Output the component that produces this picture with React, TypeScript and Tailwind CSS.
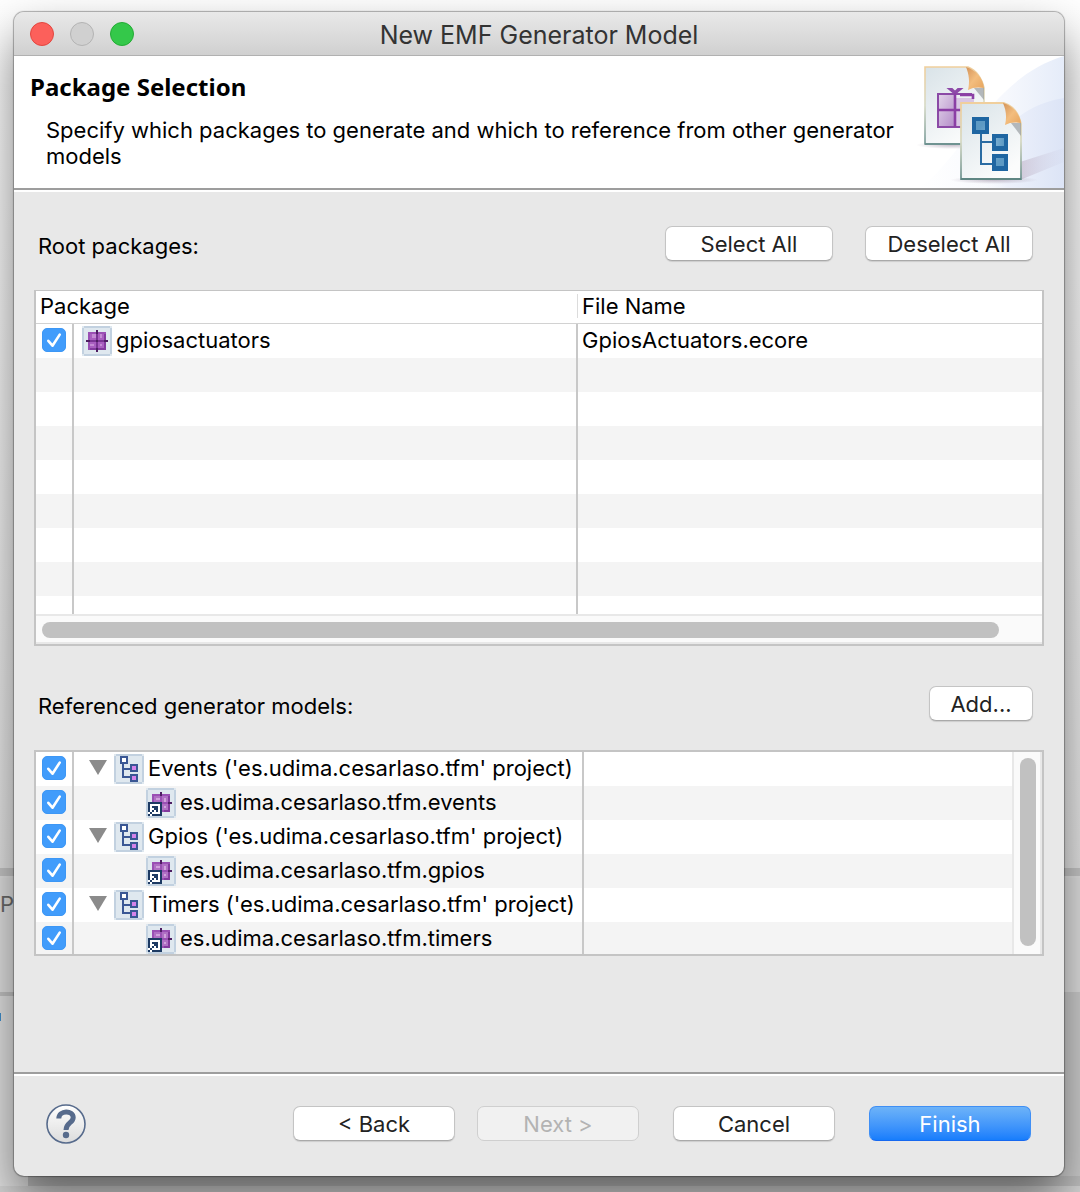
import { useState } from "react";
import type { ReactNode } from "react";

function Checkbox({ label }: { label: string }) {
  const [on, setOn] = useState(true);
  return (
    <span className="relative block size-6">
      <input
        type="checkbox"
        aria-label={label}
        checked={on}
        onChange={(e) => setOn(e.target.checked)}
        className="block size-6 appearance-none rounded-[5px] border border-gray-300 bg-white checked:border-[#3d97f5] checked:bg-[#419cfb]"
      />
      {on && (
        <svg viewBox="0 0 24 24" className="pointer-events-none absolute inset-0 size-6">
          <path d="M6.3 12.8l4.2 4.9L17.7 6.600" fill="none" stroke="#fff" strokeWidth="2.600" strokeLinecap="round" strokeLinejoin="round" />
        </svg>
      )}
    </span>
  );
}

function IconFrame({ children }: { children: ReactNode }) {
  return (
    <svg viewBox="0 0 30 30" className="size-[30px] shrink-0" shapeRendering="crispEdges" aria-hidden="true">
      <rect width="30" height="30" fill="#dfe8ef" />
      <path d="M2 0H28V2H2zM2 28H28V30H2zM0 2H2V28H0zM28 2H30V28H28z" fill="#c2d1e0" />
      {children}
    </svg>
  );
}

function PackageIcon() {
  return (
    <IconFrame>
      <rect x="6" y="6" width="18" height="18" fill="#9a50b4" />
      <path d="M22 8h2v16H8v-2h14z" fill="#833a9e" />
      <path d="M8 8h6v6H8zM16 8h6v6h-6zM8 16h6v6H8zM16 16h6v6h-6z" fill="#a95fc0" />
      <path d="M10 8h4v4h-4zM18 8h2v4h-2zM8 18h4v2H8zM18 18h2v2h-2z" fill="#c48bd4" />
      <path d="M14 6h2v18h-2zM6 14h18v2H6z" fill="#7a3494" />
      <path d="M14 4h2v4h-2zM14 22h2v4h-2zM4 14h4v2H4zM22 14h4v2h-4zM14 14h2v2h-2z" fill="#4e1d62" />
    </IconFrame>
  );
}

function PackageLinkIcon() {
  return (
    <IconFrame>
      <rect x="6" y="6" width="18" height="18" fill="#9a50b4" />
      <path d="M22 8h2v16h-6v-2h4z" fill="#833a9e" />
      <path d="M8 8h6v6H8zM16 8h6v6h-6zM16 16h6v6h-6z" fill="#b070c4" />
      <path d="M10 10h4v2h-4zM18 10h2v4h-2zM18 18h2v2h-2z" fill="#d0a2dc" />
      <path d="M14 4h2v4h-2zM22 14h4v2h-4z" fill="#4e1d62" />
      <rect x="2" y="14" width="14" height="14" fill="#fff" />
      <path d="M2 14h14v14H6v-2h8V16H4v8H2z" fill="#1d3a63" />
      <path d="M6 18h6v6h-2v-4H6zM8 20h2v2H8zM6 22h2v2H6zM4 24h2v2H4zM2 26h2v2H2z" fill="#1d3a63" />
    </IconFrame>
  );
}

function ModelIcon() {
  return (
    <IconFrame>
      <path d="M8 10h2v4h6v2h-6v6h6v2H8zM6 2h8v8H6zM16 10h8v8h-8zM16 20h8v8h-8z" fill="#3a5794" />
      <rect x="8" y="4" width="4" height="4" fill="#fff" />
      <path d="M18 12h4v4h-4zM18 22h4v4h-4z" fill="#d583ea" />
    </IconFrame>
  );
}

function WizardArt() {
  return (
    <svg viewBox="0 0 154 132" className="h-[132px] w-[154px] shrink-0" aria-hidden="true">
      <defs>
        <linearGradient id="wave" x1="0" x2="1">
          <stop offset="0" stopColor="#fff" />
          <stop offset=".6" stopColor="#f6f8fd" />
          <stop offset="1" stopColor="#e5ecf9" />
        </linearGradient>
        <linearGradient id="wave2" x1="0" x2="1">
          <stop offset="0" stopColor="#fff" stopOpacity="0" />
          <stop offset=".4" stopColor="#edf1fb" />
          <stop offset="1" stopColor="#dce4f6" />
        </linearGradient>
        <linearGradient id="paper" x1="0" x2=".6" y1="0" y2="1">
          <stop offset="0" stopColor="#d9e3e8" />
          <stop offset="1" stopColor="#fbfcfc" />
        </linearGradient>
        <linearGradient id="edge" x1="0" x2="0" y1="0" y2="1">
          <stop offset="0" stopColor="#f0cf9c" />
          <stop offset=".5" stopColor="#d6d9c4" />
          <stop offset="1" stopColor="#6f9391" />
        </linearGradient>
        <linearGradient id="fold" x1="0" x2="1" y1="0" y2="1">
          <stop offset="0" stopColor="#d3935a" />
          <stop offset=".5" stopColor="#f3bd7e" />
          <stop offset="1" stopColor="#e6a35c" />
        </linearGradient>
        <radialGradient id="shade">
          <stop offset="0" stopColor="#9a8ba0" stopOpacity=".55" />
          <stop offset="1" stopColor="#9a8ba0" stopOpacity="0" />
        </radialGradient>
        <linearGradient id="cast" x1="0" x2="1">
          <stop offset="0" stopColor="#b5a3b8" stopOpacity=".8" />
          <stop offset="1" stopColor="#cdd0e6" stopOpacity=".2" />
        </linearGradient>
        <linearGradient id="gift" x1="0" x2="1" y1="0" y2="1">
          <stop offset="0" stopColor="#e3d6ea" />
          <stop offset="1" stopColor="#b48cc9" />
        </linearGradient>
        <radialGradient id="node">
          <stop offset="0" stopColor="#8dbbda" />
          <stop offset="1" stopColor="#5d9ac4" />
        </radialGradient>
      </defs>
      <path d="M10 132C60 92 82 22 154 0V132z" fill="url(#wave)" />
      <path d="M60 132C80 75 115 48 154 42V132z" fill="url(#wave2)" />
      <path d="M110 106L154 92v14l-44 18z" fill="url(#cast)" opacity=".6" />
      <ellipse cx="42" cy="89" rx="36" ry="4" fill="url(#shade)" />
      <path d="M15 11H58C66 14 72 22 74 32V88H15z" fill="url(#paper)" stroke="url(#edge)" strokeWidth="1.600" />
      <path d="M15 88H60" stroke="#6f9391" strokeWidth="2" />
      <path d="M64 32H74V44z" fill="#8b8f94" opacity=".6" />
      <path d="M56 11C66 14 73 22 74 32C69 31 63 31 58 34C60 26 59 18 56 11z" fill="url(#fold)" />
      <rect x="28" y="38" width="17" height="33" fill="url(#gift)" />
      <rect x="46" y="42" width="18" height="29" fill="#d9c6e4" />
      <path d="M62 38H28V71H56" fill="none" stroke="#8b4aa6" strokeWidth="2" />
      <path d="M45 36V71M28 54H62M50 39H63V43" fill="none" stroke="#8b3fa5" strokeWidth="2.600" />
      <path d="M44 37L39 33H42L45 36L48 33H51L46 37" stroke="#8d4aa8" strokeWidth="1.800" fill="none" />
      <ellipse cx="84" cy="124" rx="44" ry="4" fill="url(#shade)" />
      <path d="M51 47H94C103 50 109 58 111 68V123H51z" fill="url(#paper)" stroke="url(#edge)" strokeWidth="1.800" />
      <path d="M51 123H111" stroke="#5f8683" strokeWidth="2" />
      <path d="M101 67H111V80z" fill="#8b8f94" opacity=".6" />
      <path d="M93 47C103 50 110 58 111 67C106 66 100 66 95 69C97 61 96 54 93 47z" fill="url(#fold)" />
      <path d="M71 78V108H84M71 86H84" fill="none" stroke="#2a6ca3" strokeWidth="2" />
      <path d="M62 61h17v17H62zM82 78h16v17H82zM82 98h16v17H82z" fill="#1f66a2" />
      <path d="M66 65h9v9h-9zM86 82h8v8h-8zM86 102h8v8h-8z" fill="url(#node)" />
    </svg>
  );
}

function PushButton({ children, width, disabled, primary }: { children: ReactNode; width: string; disabled?: boolean; primary?: boolean }) {
  const look = primary
    ? "border-[#3f8ff5] bg-linear-to-b from-[#6db3f8] to-[#167dfc] text-white border-b-[#1668f0]"
    : disabled
      ? "border-[#cfcfcf] bg-[#f1f1f1] text-[#b3b3b3]"
      : "border-[#c4c4c4] border-b-[#a9a9a9] bg-white text-[#222] shadow-[0_1px_1px_rgba(0,0,0,0.12)]";
  return (
    <button type="button" disabled={disabled} className={`${width} ${look} h-[35px] rounded-[7px] border text-center leading-8`}>
      {children}
    </button>
  );
}

function Divider() {
  return <div className="h-1 shrink-0 border-t-2 border-[#9d9d9d] bg-white" />;
}

const emptyRows = [1, 2, 3, 4, 5, 6, 7, 8];

function PackageTable() {
  return (
    <div className="border-2 border-t border-[#c4c4c4] bg-white">
      <div className="h-[323px] overflow-hidden">
        <table className="w-full table-fixed border-separate border-spacing-0 text-left">
          <colgroup>
            <col className="w-[38px]" />
            <col className="w-[504px]" />
            <col />
          </colgroup>
          <thead>
            <tr className="h-[33px]">
              <th colSpan={2} className="border-b border-[#d2d2d2] p-0 pb-0.5 pl-1 font-normal">
                <div className="border-r border-[#dcdcdc] leading-6">Package</div>
              </th>
              <th className="border-b border-[#d2d2d2] p-0 pb-0.5 pl-1 leading-6 font-normal">File Name</th>
            </tr>
          </thead>
          <tbody>
            <tr className="h-[34px]">
              <td className="border-r-2 border-[#c8c8c8] p-0 pt-1 pl-[6px] align-top">
                <Checkbox label="gpiosactuators" />
              </td>
              <td className="border-r-2 border-[#c8c8c8] p-0 pl-2">
                <div className="flex items-center gap-1">
                  <PackageIcon />
                  <span className="pb-0.5">gpiosactuators</span>
                </div>
              </td>
              <td className="p-0 pb-0.5 pl-1">GpiosActuators.ecore</td>
            </tr>
            {emptyRows.map((n) => (
              <tr key={n} className="h-[34px] odd:bg-white even:bg-[#f4f4f4]">
                <td className="border-r-2 border-[#c8c8c8] p-0" />
                <td className="border-r-2 border-[#c8c8c8] p-0" />
                <td className="p-0" />
              </tr>
            ))}
          </tbody>
        </table>
      </div>
      <div className="h-[30px] border-y-2 border-[#e8e8e8] bg-[#fafafa] pt-[6px] pr-[43px] pl-[6px]">
        <div className="h-4 rounded-full bg-[#c1c1c1]" />
      </div>
    </div>
  );
}

const models = [
  { name: "Events ('es.udima.cesarlaso.tfm' project)", child: "es.udima.cesarlaso.tfm.events" },
  { name: "Gpios ('es.udima.cesarlaso.tfm' project)", child: "es.udima.cesarlaso.tfm.gpios" },
  { name: "Timers ('es.udima.cesarlaso.tfm' project)", child: "es.udima.cesarlaso.tfm.timers" },
];

function ModelTree() {
  const rows = models.flatMap((m) => [
    { text: m.name, parent: true },
    { text: m.child, parent: false },
  ]);
  return (
    <div className="flex h-[206px] border-2 border-[#c4c4c4] bg-white">
      <div className="min-w-0 flex-1 overflow-hidden">
        <table className="w-full table-fixed border-separate border-spacing-0 text-left">
          <colgroup>
            <col className="w-[38px]" />
            <col className="w-[510px]" />
            <col />
          </colgroup>
          <tbody>
            {rows.map((r) => (
              <tr key={r.text} className="h-[34px] odd:bg-white even:bg-[#f4f4f4]">
                <td className="border-r-2 border-[#c8c8c8] p-0 pt-1 pl-[6px] align-top">
                  <Checkbox label={r.text} />
                </td>
                <td className="border-r-2 border-[#c8c8c8] p-0">
                  {r.parent ? (
                    <div className="flex items-center gap-1 pl-[15px] whitespace-nowrap">
                      <button type="button" aria-label="Collapse" aria-expanded="true" className="mr-[3px] w-[18px] pb-1">
                        <svg viewBox="0 0 18 15" className="block h-[15px] w-[18px]">
                          <path d="M0 0H18L9 15z" fill="#8b8b8b" />
                        </svg>
                      </button>
                      <ModelIcon />
                      <span className="pb-0.5">{r.text}</span>
                    </div>
                  ) : (
                    <div className="flex items-center gap-1 pl-[72px] whitespace-nowrap">
                      <PackageLinkIcon />
                      <span className="pb-0.5">{r.text}</span>
                    </div>
                  )}
                </td>
                <td className="p-0" />
              </tr>
            ))}
          </tbody>
        </table>
      </div>
      <div className="w-[30px] border-x-2 border-[#e8e8e8] bg-[#fafafa] pt-[6px] pb-2 pl-[6px]">
        <div className="h-full w-4 rounded-full bg-[#c1c1c1]" />
      </div>
    </div>
  );
}

function Backdrop() {
  return (
    <div className="absolute inset-0 flex flex-col overflow-hidden bg-white text-[#6b6b6b]" aria-hidden="true">
      <div className="h-[868px] shrink-0 bg-linear-to-b from-white via-[#f4f4f4] to-[#e6e6e6]" />
      <div className="h-[10px] shrink-0 border-b-2 border-[#e4e4e4] bg-[#c8c8c8]" />
      <div className="h-[114px] shrink-0 bg-[#e2e2e2] pt-3 leading-7">P</div>
      <div className="flex flex-1 justify-between bg-[#e2e2e2]">
        <div className="w-7 border-t-4 border-[#c4c4c4] pt-[17px]">
          <div className="h-2 w-px bg-[#3f8fcc]" />
        </div>
        <div className="w-7 bg-[#cfcfcf]" />
      </div>
      <div className="h-[10px] border-l-[28px] border-[#e2e2e2] bg-[#c0c0c0]" />
      <div className="h-[6px] bg-[#d6d6d6]" />
    </div>
  );
}

export default function App() {
  return (
    <div className="relative flex min-h-screen flex-col pt-3 pr-4 pb-4 pl-[14px] font-['Inter','Liberation_Sans',sans-serif] text-[22px] leading-[26px] text-black">
      <Backdrop />
      <main className="relative flex flex-1 flex-col overflow-hidden rounded-[10px] bg-[#e8e8e8] shadow-[0_0_1px_1px_rgba(0,0,0,0.3),0_24px_48px_rgba(0,0,0,0.5)]">
        <header className="flex h-11 items-center border-b border-[#b1b1b1] bg-linear-to-b from-[#e9e9e9] to-[#d0d0d0] px-4">
          <div className="flex flex-1 gap-4">
            <button type="button" aria-label="Close" className="size-6 rounded-full border border-[#e2463f] bg-[#fc605b]" />
            <button type="button" aria-label="Minimize" disabled className="size-6 rounded-full border border-[#b3b3b3] bg-[#d0d0d0]" />
            <button type="button" aria-label="Zoom" className="size-6 rounded-full border border-[#24ab35] bg-[#34c84a]" />
          </div>
          <h1 className="pt-0.5 text-[25px] text-[#333]">New EMF Generator Model</h1>
          <div className="flex-1" />
        </header>
        <section className="flex h-[132px] justify-between bg-white">
          <div className="pt-[17px] pl-4">
            <h2 className="font-['Noto_Sans',sans-serif] text-[24px] leading-7 font-bold">Package Selection</h2>
            <p className="pt-4 pl-4">
              Specify which packages to generate and which to reference from other generator models
            </p>
          </div>
          <WizardArt />
        </section>
        <Divider />
        <div className="flex-1 px-5">
          <div className="flex h-[98px] items-start gap-8 pt-[34px] pr-[11px] pl-1">
            <div className="flex-1 pt-[7px]">Root packages:</div>
            <PushButton width="w-[168px]">Select All</PushButton>
            <PushButton width="w-[168px]">Deselect All</PushButton>
          </div>
          <PackageTable />
          <div className="flex h-[104px] items-start pt-10 pr-[11px] pl-1">
            <div className="flex-1 pt-[7px]">Referenced generator models:</div>
            <PushButton width="w-[104px]">Add...</PushButton>
          </div>
          <ModelTree />
        </div>
        <Divider />
        <footer className="flex h-[100px] items-start pt-7 pr-[33px] pl-8">
          <button type="button" aria-label="Help" className="size-10">
            <svg viewBox="0 0 40 40" className="size-10">
              <defs>
                <linearGradient id="help" x1="0" x2="0" y1="0" y2="1">
                  <stop offset="0" stopColor="#fff" />
                  <stop offset="1" stopColor="#dcdcdc" />
                </linearGradient>
              </defs>
              <circle cx="20" cy="20" r="19" fill="url(#help)" stroke="#576b8c" strokeWidth="1.600" />
              <path d="M12.800 14.500C13 6 27.200 6 27.200 13.500C27.200 19 20 18.500 20 26" fill="none" stroke="#576b8c" strokeWidth="5" />
              <circle cx="20" cy="31" r="3.200" fill="#576b8c" />
            </svg>
          </button>
          <div className="flex flex-1 justify-end gap-[34px] pt-0.5">
            <div className="flex gap-[22px]">
              <PushButton width="w-[162px]">&lt; Back</PushButton>
              <PushButton width="w-[162px]" disabled>Next &gt;</PushButton>
            </div>
            <PushButton width="w-[162px]">Cancel</PushButton>
            <PushButton width="w-[162px]" primary>Finish</PushButton>
          </div>
        </footer>
      </main>
    </div>
  );
}
